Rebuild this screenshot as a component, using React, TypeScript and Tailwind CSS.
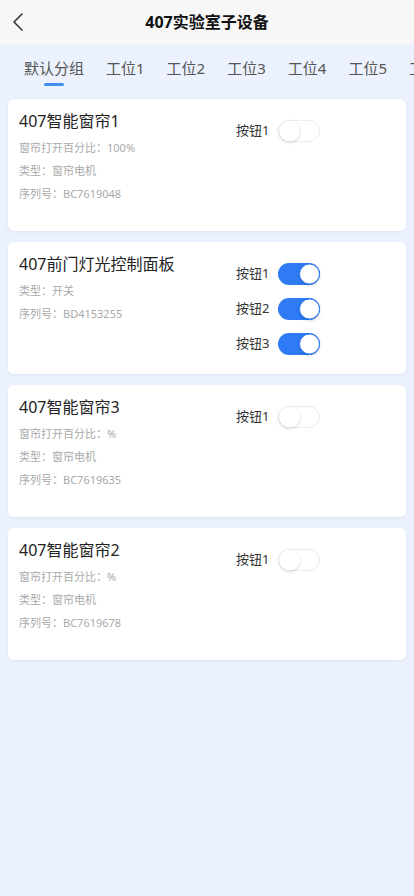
import { useState } from 'react';

type Device = {
  name: string;
  lines: string[];
  buttons: boolean[];
};

const tabs = ['默认分组', '工位1', '工位2', '工位3', '工位4', '工位5', '工位6'];

const devices: Device[] = [
  { name: '407智能窗帘1', lines: ['窗帘打开百分比：100%', '类型：窗帘电机', '序列号：BC7619048'], buttons: [false] },
  { name: '407前门灯光控制面板', lines: ['类型：开关', '序列号：BD4153255'], buttons: [true, true, true] },
  { name: '407智能窗帘3', lines: ['窗帘打开百分比：%', '类型：窗帘电机', '序列号：BC7619635'], buttons: [false] },
  { name: '407智能窗帘2', lines: ['窗帘打开百分比：%', '类型：窗帘电机', '序列号：BC7619678'], buttons: [false] },
];

function Toggle({ on, onClick }: { on: boolean; onClick: () => void }) {
  return (
    <button onClick={onClick}
      className={`relative w-[42px] h-[22px] rounded-full transition-colors ${on ? 'bg-[#2f7bf5]' : 'bg-white border border-[#ececec]'}`}>
      <span className={`absolute top-1/2 -translate-y-1/2 w-[21px] h-[21px] rounded-full bg-white shadow-[0_1px_3px_rgba(0,0,0,0.18)] ${on ? 'right-0 border border-[#2f7bf5]' : 'left-0'}`} />
    </button>
  );
}

function DeviceCard({ device }: { device: Device }) {
  const [state, setState] = useState(device.buttons);
  return (
    <div className="bg-white rounded-[6px] min-h-[132px] flex px-[11px] pt-[10px] pb-[19px] shadow-[0_1px_3px_rgba(200,210,230,0.35)]">
      {/* Info */}
      <div className="w-[217px] shrink-0">
        <div className="text-[16px] leading-[24px] text-[#222]">{device.name}</div>
        <div className="mt-[3px] flex flex-col">
          {device.lines.map((l) => (
            <div key={l} className="text-[11px] leading-[23px] text-[#a9a9a9]">{l}</div>
          ))}
        </div>
      </div>

      {/* Switches */}
      <div className="flex flex-col pt-[11px] gap-[13px]">
        {state.map((on, i) => (
          <div key={i} className="flex items-center gap-[9px] h-[22px]">
            <span className="text-[13px] text-[#333]">按钮{i + 1}</span>
            <Toggle on={on} onClick={() => setState(state.map((v, j) => (j === i ? !v : v)))} />
          </div>
        ))}
      </div>
    </div>
  );
}

export default function App() {
  const [active, setActive] = useState(0);
  return (
    <div className="min-h-[896px] w-[414px] bg-[#ebf1fd] overflow-hidden" style={{ fontFamily: '"Noto Sans", "Noto Sans CJK SC", sans-serif' }}>
      {/* Header */}
      <div className="relative h-[44px] bg-[#f7f7f7] flex items-center justify-center">
        <svg className="absolute left-[11px] top-[12px]" width="14" height="20" viewBox="0 0 14 20" fill="none">
          <path d="M11 2 L3 10 L11 18" stroke="#333" strokeWidth="1.6" strokeLinecap="round" strokeLinejoin="round" />
        </svg>
        <span className="text-[16px] font-bold text-[#111]">407实验室子设备</span>
      </div>

      {/* Tabs */}
      <div className="h-[48px] flex gap-[22px] pl-[24px] whitespace-nowrap overflow-hidden">
        {tabs.map((t, i) => (
          <button key={t} onClick={() => setActive(i)} className="relative h-full flex items-center shrink-0">
            <span className="text-[15px] text-[#555]">{t}</span>
            {i === active && (
              <span className="absolute left-1/2 -translate-x-1/2 bottom-[6px] w-[20px] h-[3px] rounded-full bg-[#3f8ef0]" />
            )}
          </button>
        ))}
      </div>

      {/* Device list */}
      <div className="flex flex-col gap-[11px] px-[8px] pt-[7px]">
        {devices.map((d) => (
          <DeviceCard key={d.name} device={d} />
        ))}
      </div>
    </div>
  );
}
